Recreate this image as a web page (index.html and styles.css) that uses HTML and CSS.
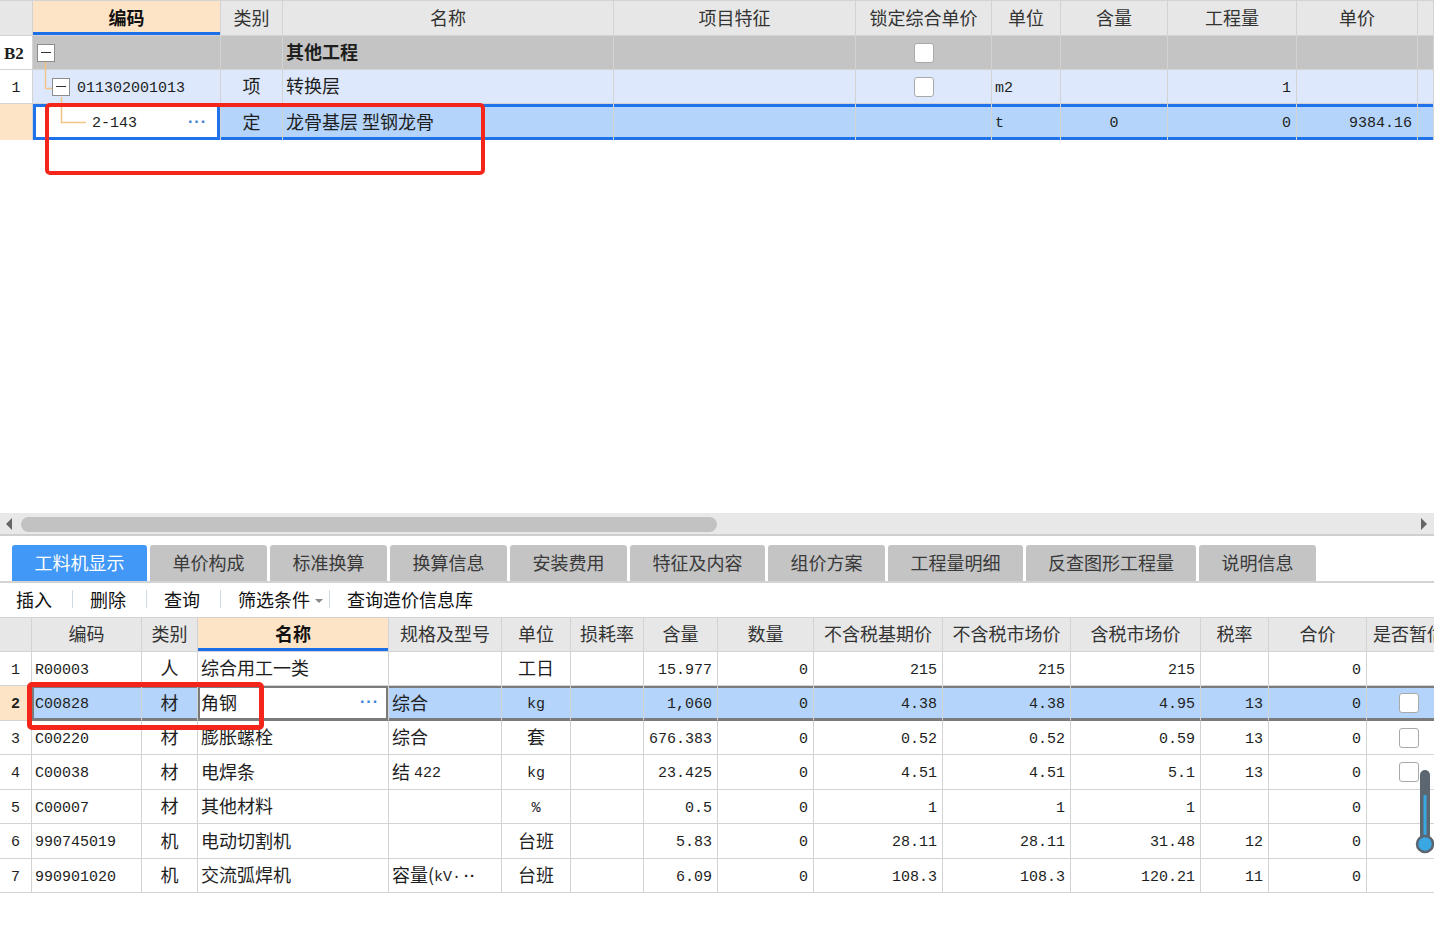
FILE: index.html
```html
<!DOCTYPE html>
<html lang="zh-CN">
<head>
<meta charset="utf-8">
<title>工料机显示</title>
<link rel="stylesheet" href="styles.css">
</head>
<body>
<section class="upper t1">
  <div class="row head">
    <div class="c"></div>
    <div class="c on">编码</div>
    <div class="c">类别</div>
    <div class="c">名称</div>
    <div class="c">项目特征</div>
    <div class="c">锁定综合单价</div>
    <div class="c">单位</div>
    <div class="c">含量</div>
    <div class="c">工程量</div>
    <div class="c">单价</div>
    <div class="c"></div>
  </div>
  <div class="row b2">
    <div class="c rh b2h">B2</div>
    <div class="c code"><span class="exp exp0"></span></div>
    <div class="c"></div>
    <div class="c bold">其他工程</div>
    <div class="c"></div>
    <div class="c ctr"><span class="chk"></span></div>
    <div class="c"></div>
    <div class="c"></div>
    <div class="c"></div>
    <div class="c"></div>
    <div class="c"></div>
  </div>
  <div class="row r1">
    <div class="c rh ctr n">1</div>
    <div class="c code"><span class="exp exp1"></span><span class="n">011302001013</span></div>
    <div class="c ctr">项</div>
    <div class="c">转换层</div>
    <div class="c"></div>
    <div class="c ctr"><span class="chk"></span></div>
    <div class="c n">m2</div>
    <div class="c"></div>
    <div class="c r n">1</div>
    <div class="c"></div>
    <div class="c"></div>
  </div>
  <div class="row sel">
    <div class="c rh cur"></div>
    <div class="c code edit"><span class="n lvl2">2-143</span><span class="dots">···</span></div>
    <div class="c ctr">定</div>
    <div class="c">龙骨基层 型钢龙骨</div>
    <div class="c"></div>
    <div class="c"></div>
    <div class="c n">t</div>
    <div class="c ctr n">0</div>
    <div class="c r n">0</div>
    <div class="c r n">9384.16</div>
    <div class="c"></div>
  </div>
  <svg class="tree" width="100" height="140" viewBox="0 0 100 140" aria-hidden="true">
    <path d="M45.5 62 V88.5 H52" fill="none" stroke="#f3c488" stroke-width="1.5"/>
    <path d="M61.5 97 V122.5 H86" fill="none" stroke="#f3c488" stroke-width="1.5"/>
  </svg>
</section>

<div class="hscroll">
  <span class="arrow left"></span>
  <span class="thumb"></span>
  <span class="arrow right"></span>
</div>

<nav class="tabs">
  <span class="tab active w5">工料机显示</span>
  <span class="tab w4">单价构成</span>
  <span class="tab w4">标准换算</span>
  <span class="tab w4">换算信息</span>
  <span class="tab w4">安装费用</span>
  <span class="tab w5">特征及内容</span>
  <span class="tab w4">组价方案</span>
  <span class="tab w5">工程量明细</span>
  <span class="tab w7">反查图形工程量</span>
  <span class="tab w4">说明信息</span>
</nav>

<div class="toolbar">
  <span class="tool">插入</span><span class="sep"></span>
  <span class="tool">删除</span><span class="sep"></span>
  <span class="tool">查询</span><span class="sep"></span>
  <span class="tool">筛选条件<span class="caret"></span></span><span class="sep s2"></span>
  <span class="tool">查询造价信息库</span>
</div>

<section class="lower t2">
  <div class="row head">
    <div class="c"></div>
    <div class="c">编码</div>
    <div class="c">类别</div>
    <div class="c on">名称</div>
    <div class="c">规格及型号</div>
    <div class="c">单位</div>
    <div class="c">损耗率</div>
    <div class="c">含量</div>
    <div class="c">数量</div>
    <div class="c">不含税基期价</div>
    <div class="c">不含税市场价</div>
    <div class="c">含税市场价</div>
    <div class="c">税率</div>
    <div class="c">合价</div>
    <div class="c lft">是否暂估</div>
  </div>
  <div class="row h34">
    <div class="c rh ctr n">1</div>
    <div class="c n">R00003</div>
    <div class="c ctr">人</div>
    <div class="c">综合用工一类</div>
    <div class="c"></div>
    <div class="c ctr">工日</div>
    <div class="c"></div>
    <div class="c r n">15.977</div>
    <div class="c r n">0</div>
    <div class="c r n">215</div>
    <div class="c r n">215</div>
    <div class="c r n">215</div>
    <div class="c"></div>
    <div class="c r n">0</div>
    <div class="c"></div>
  </div>
  <div class="row h35 sel2">
    <div class="c rh cur ctr n bold">2</div>
    <div class="c n first">C00828</div>
    <div class="c ctr">材</div>
    <div class="c edit2">角钢<span class="dots d2">···</span></div>
    <div class="c">综合</div>
    <div class="c ctr n">kg</div>
    <div class="c"></div>
    <div class="c r n">1,060</div>
    <div class="c r n">0</div>
    <div class="c r n">4.38</div>
    <div class="c r n">4.38</div>
    <div class="c r n">4.95</div>
    <div class="c r n">13</div>
    <div class="c r n">0</div>
    <div class="c cb"><span class="chk"></span></div>
  </div>
  <div class="row h34">
    <div class="c rh ctr n">3</div>
    <div class="c n">C00220</div>
    <div class="c ctr">材</div>
    <div class="c">膨胀螺栓</div>
    <div class="c">综合</div>
    <div class="c ctr">套</div>
    <div class="c"></div>
    <div class="c r n">676.383</div>
    <div class="c r n">0</div>
    <div class="c r n">0.52</div>
    <div class="c r n">0.52</div>
    <div class="c r n">0.59</div>
    <div class="c r n">13</div>
    <div class="c r n">0</div>
    <div class="c cb"><span class="chk"></span></div>
  </div>
  <div class="row h35">
    <div class="c rh ctr n">4</div>
    <div class="c n">C00038</div>
    <div class="c ctr">材</div>
    <div class="c">电焊条</div>
    <div class="c"><span>结&nbsp;</span><span class="n">422</span></div>
    <div class="c ctr n">kg</div>
    <div class="c"></div>
    <div class="c r n">23.425</div>
    <div class="c r n">0</div>
    <div class="c r n">4.51</div>
    <div class="c r n">4.51</div>
    <div class="c r n">5.1</div>
    <div class="c r n">13</div>
    <div class="c r n">0</div>
    <div class="c cb"><span class="chk"></span></div>
  </div>
  <div class="row h34">
    <div class="c rh ctr n">5</div>
    <div class="c n">C00007</div>
    <div class="c ctr">材</div>
    <div class="c">其他材料</div>
    <div class="c"></div>
    <div class="c ctr n">%</div>
    <div class="c"></div>
    <div class="c r n">0.5</div>
    <div class="c r n">0</div>
    <div class="c r n">1</div>
    <div class="c r n">1</div>
    <div class="c r n">1</div>
    <div class="c"></div>
    <div class="c r n">0</div>
    <div class="c"></div>
  </div>
  <div class="row h35">
    <div class="c rh ctr n">6</div>
    <div class="c n">990745019</div>
    <div class="c ctr">机</div>
    <div class="c">电动切割机</div>
    <div class="c"></div>
    <div class="c ctr">台班</div>
    <div class="c"></div>
    <div class="c r n">5.83</div>
    <div class="c r n">0</div>
    <div class="c r n">28.11</div>
    <div class="c r n">28.11</div>
    <div class="c r n">31.48</div>
    <div class="c r n">12</div>
    <div class="c r n">0</div>
    <div class="c"></div>
  </div>
  <div class="row h34">
    <div class="c rh ctr n">7</div>
    <div class="c n">990901020</div>
    <div class="c ctr">机</div>
    <div class="c">交流弧焊机</div>
    <div class="c"><span>容量(</span><span class="n">kV·</span><span class="ell">··</span></div>
    <div class="c ctr">台班</div>
    <div class="c"></div>
    <div class="c r n">6.09</div>
    <div class="c r n">0</div>
    <div class="c r n">108.3</div>
    <div class="c r n">108.3</div>
    <div class="c r n">120.21</div>
    <div class="c r n">11</div>
    <div class="c r n">0</div>
    <div class="c"></div>
  </div>
</section>

<svg class="thermo" width="22" height="92" viewBox="0 0 22 92" aria-hidden="true">
  <rect x="6" y="2" width="10" height="72" rx="5" fill="#5b6671"/>
  <rect x="9.5" y="27" width="3" height="48" fill="#3aa6e2"/>
  <circle cx="11" cy="76" r="8" fill="#3aa6e2" stroke="#5b6671" stroke-width="2.5"/>
</svg>

<div class="mark mark1"></div>
<div class="mark mark2"></div>
</body>
</html>
```

FILE: styles.css
```css
* { box-sizing: border-box; margin: 0; padding: 0; }
html, body { width: 1434px; height: 934px; overflow: hidden; background: #fff; }
body {
  position: relative;
  font-family: "Noto Sans CJK SC", "Noto Sans", sans-serif;
  font-size: 18px;
  color: #1e1e1e;
}

.row { display: grid; }
.t1 .row { grid-template-columns: 33px 188px 62px 331px 242px 136px 69px 107px 129px 121px 16px; height: 34px; }
.t2 .row { grid-template-columns: 32px 110px 56px 191px 113px 69px 73px 74px 96px 129px 128px 130px 68px 98px 120px; }

.c {
  display: flex;
  align-items: center;
  white-space: nowrap;
  overflow: hidden;
  padding: 0 3px 3px;
  line-height: 1;
  border-right: 1px solid #d3d3d3;
  border-bottom: 1px solid #d3d3d3;
}
.ctr { justify-content: center; }
.r { justify-content: flex-end; padding-right: 5px; }
.bold { font-weight: 700; }
.n { font-family: "Liberation Mono", monospace; font-size: 15px; }
.c.n { padding-top: 3px; padding-bottom: 0; }
.c span.n { position: relative; top: 3px; }

.head .c { background: #e7e7e7; justify-content: center; color: #333; }
.head .c.on { background: #fde4c6; color: #111; font-weight: 700; box-shadow: inset 0 -3px 0 #1d6fe8; }
.head .c.lft { justify-content: flex-start; padding-left: 6px; }

/* upper grid */
.upper { position: relative; height: 513px; }
.t1 .row.head { height: 36px; }
.t1 .row.head .c { border-top: 1px solid #d3d3d3; }
.b2 .c { background: #c4c4c4; }
.b2 .c.b2h { background: #fff; font-family: "Liberation Serif", serif; font-weight: 700; font-size: 17px; padding: 1px 0 0 4px; }
.r1 .c { background: #dde8fc; }
.r1 .c.rh { background: #fff; }
.rh { padding: 0; }
.code { padding-left: 4px; padding-bottom: 0; }
.exp {
  position: relative;
  flex: none;
  width: 18px;
  height: 18px;
  border: 1px solid #8c8c8c;
  background: #fff;
}
.exp::after {
  content: "";
  position: absolute;
  left: 3px;
  right: 3px;
  top: 7.5px;
  height: 1px;
  background: #333;
}
.exp1 { margin-left: 15px; margin-right: 7px; }
.code span.n { top: 1.5px; }
.chk {
  display: inline-block;
  width: 20px;
  height: 20px;
  border: 1px solid #a9a9a9;
  border-radius: 3px;
  background: #fff;
}
.ctr .chk, .cb .chk { position: relative; top: 1.5px; }

.t1 .row.sel { height: 36px; }
.sel .c { background: #b4d4fb; box-shadow: inset 0 3px 0 #1f72ea, inset 0 -3px 0 #1f72ea; border-bottom: none; }
.sel .c.cur, .t2 .c.cur { background: #fde4c6; box-shadow: none; }
.sel .c.code.edit {
  background: #fff;
  padding-left: 59px;
  box-shadow: inset 0 3px 0 #1f72ea, inset 0 -3px 0 #1f72ea, inset 3px 0 0 #1f72ea, inset -3px 0 0 #1f72ea;
}
.dots { margin-left: auto; color: #3c82d6; font-family: "Liberation Sans", sans-serif; font-weight: 700; font-size: 16px; letter-spacing: 1px; padding-right: 10px; }
.tree { position: absolute; left: 0; top: 0; }

/* horizontal scrollbar */
.hscroll {
  position: relative;
  height: 23px;
  background: #e8e8e8;
  border-bottom: 2px solid #cfcfcf;
  display: flex;
  align-items: center;
}
.thumb { position: absolute; left: 21px; width: 696px; top: 4px; height: 15px; border-radius: 8px; background: #c2c2c2; }
.arrow { position: absolute; top: 5px; width: 0; height: 0; border-top: 6px solid transparent; border-bottom: 6px solid transparent; }
.arrow.left { left: 6px; border-right: 6px solid #666; }
.arrow.right { left: 1421px; border-left: 6px solid #666; }

/* tabs */
.tabs {
  display: flex;
  gap: 3px;
  margin-top: 9px;
  padding-left: 12px;
  height: 38px;
  border-bottom: 2px solid #d3d3d3;
}
.tab {
  display: flex;
  align-items: center;
  justify-content: center;
  height: 36px;
  padding-bottom: 2px;
  background: #c4c4c4;
  color: #3a3a3a;
  border-radius: 3px 3px 0 0;
  font-size: 18px;
}
.tab.active { background: #4198f6; color: #fff; }
.w4 { width: 117px; }
.w5 { width: 135px; }
.w7 { width: 170px; }

/* toolbar */
.toolbar {
  display: flex;
  align-items: center;
  height: 34px;
  padding-left: 16px;
  padding-bottom: 2px;
  color: #111;
}
.tool { display: flex; align-items: center; }
.sep { width: 1px; height: 18px; background: #cddbe5; margin: 0 17px 0 20px; }
.sep.s2 { margin-left: 6px; }
.caret { width: 0; height: 0; border-left: 4px solid transparent; border-right: 4px solid transparent; border-top: 4px solid #888; margin-left: 5px; margin-top: 3px; }

/* lower grid */
.lower { border-top: 1px solid #d3d3d3; }
.t2 .row.head { height: 34px; }
.t2 .row.h34 { height: 34px; }
.t2 .row.h35 { height: 35px; }
.t2 .c.rh { font-size: 15px; }
.cb { padding-left: 32px; }

.sel2 .c { background: #b4d4fb; border-bottom-color: #7b7b7b; box-shadow: inset 0 2px 0 #7b7b7b, inset 0 -2px 0 #7b7b7b; }
.sel2 .c.cur { background: #fde4c6; border-bottom-color: #d3d3d3; box-shadow: none; }
.sel2 .c.first { box-shadow: inset 0 2px 0 #7b7b7b, inset 0 -2px 0 #7b7b7b, inset 2px 0 0 #7b7b7b; }
.sel2 .c.edit2 { background: #fff; box-shadow: inset 0 2px 0 #7b7b7b, inset 0 -2px 0 #7b7b7b, inset 2px 0 0 #7b7b7b, inset -2px 0 0 #7b7b7b; }
.sel2 .c.cb { background: #b4d4fb; }
.dots.d2 { padding-right: 6px; }
.ell { font-family: "Liberation Sans", sans-serif; font-weight: 700; font-size: 15px; letter-spacing: 1px; margin-left: 3px; position: relative; top: 1px; }

/* overlays */
.thermo { position: absolute; left: 1414px; top: 768px; }
.mark { position: absolute; border: 4px solid #f4261c; border-radius: 5px; }
.mark1 { left: 45px; top: 103px; width: 440px; height: 72px; }
.mark2 { left: 27px; top: 682px; width: 237px; height: 48px; border-width: 5px; }
```
